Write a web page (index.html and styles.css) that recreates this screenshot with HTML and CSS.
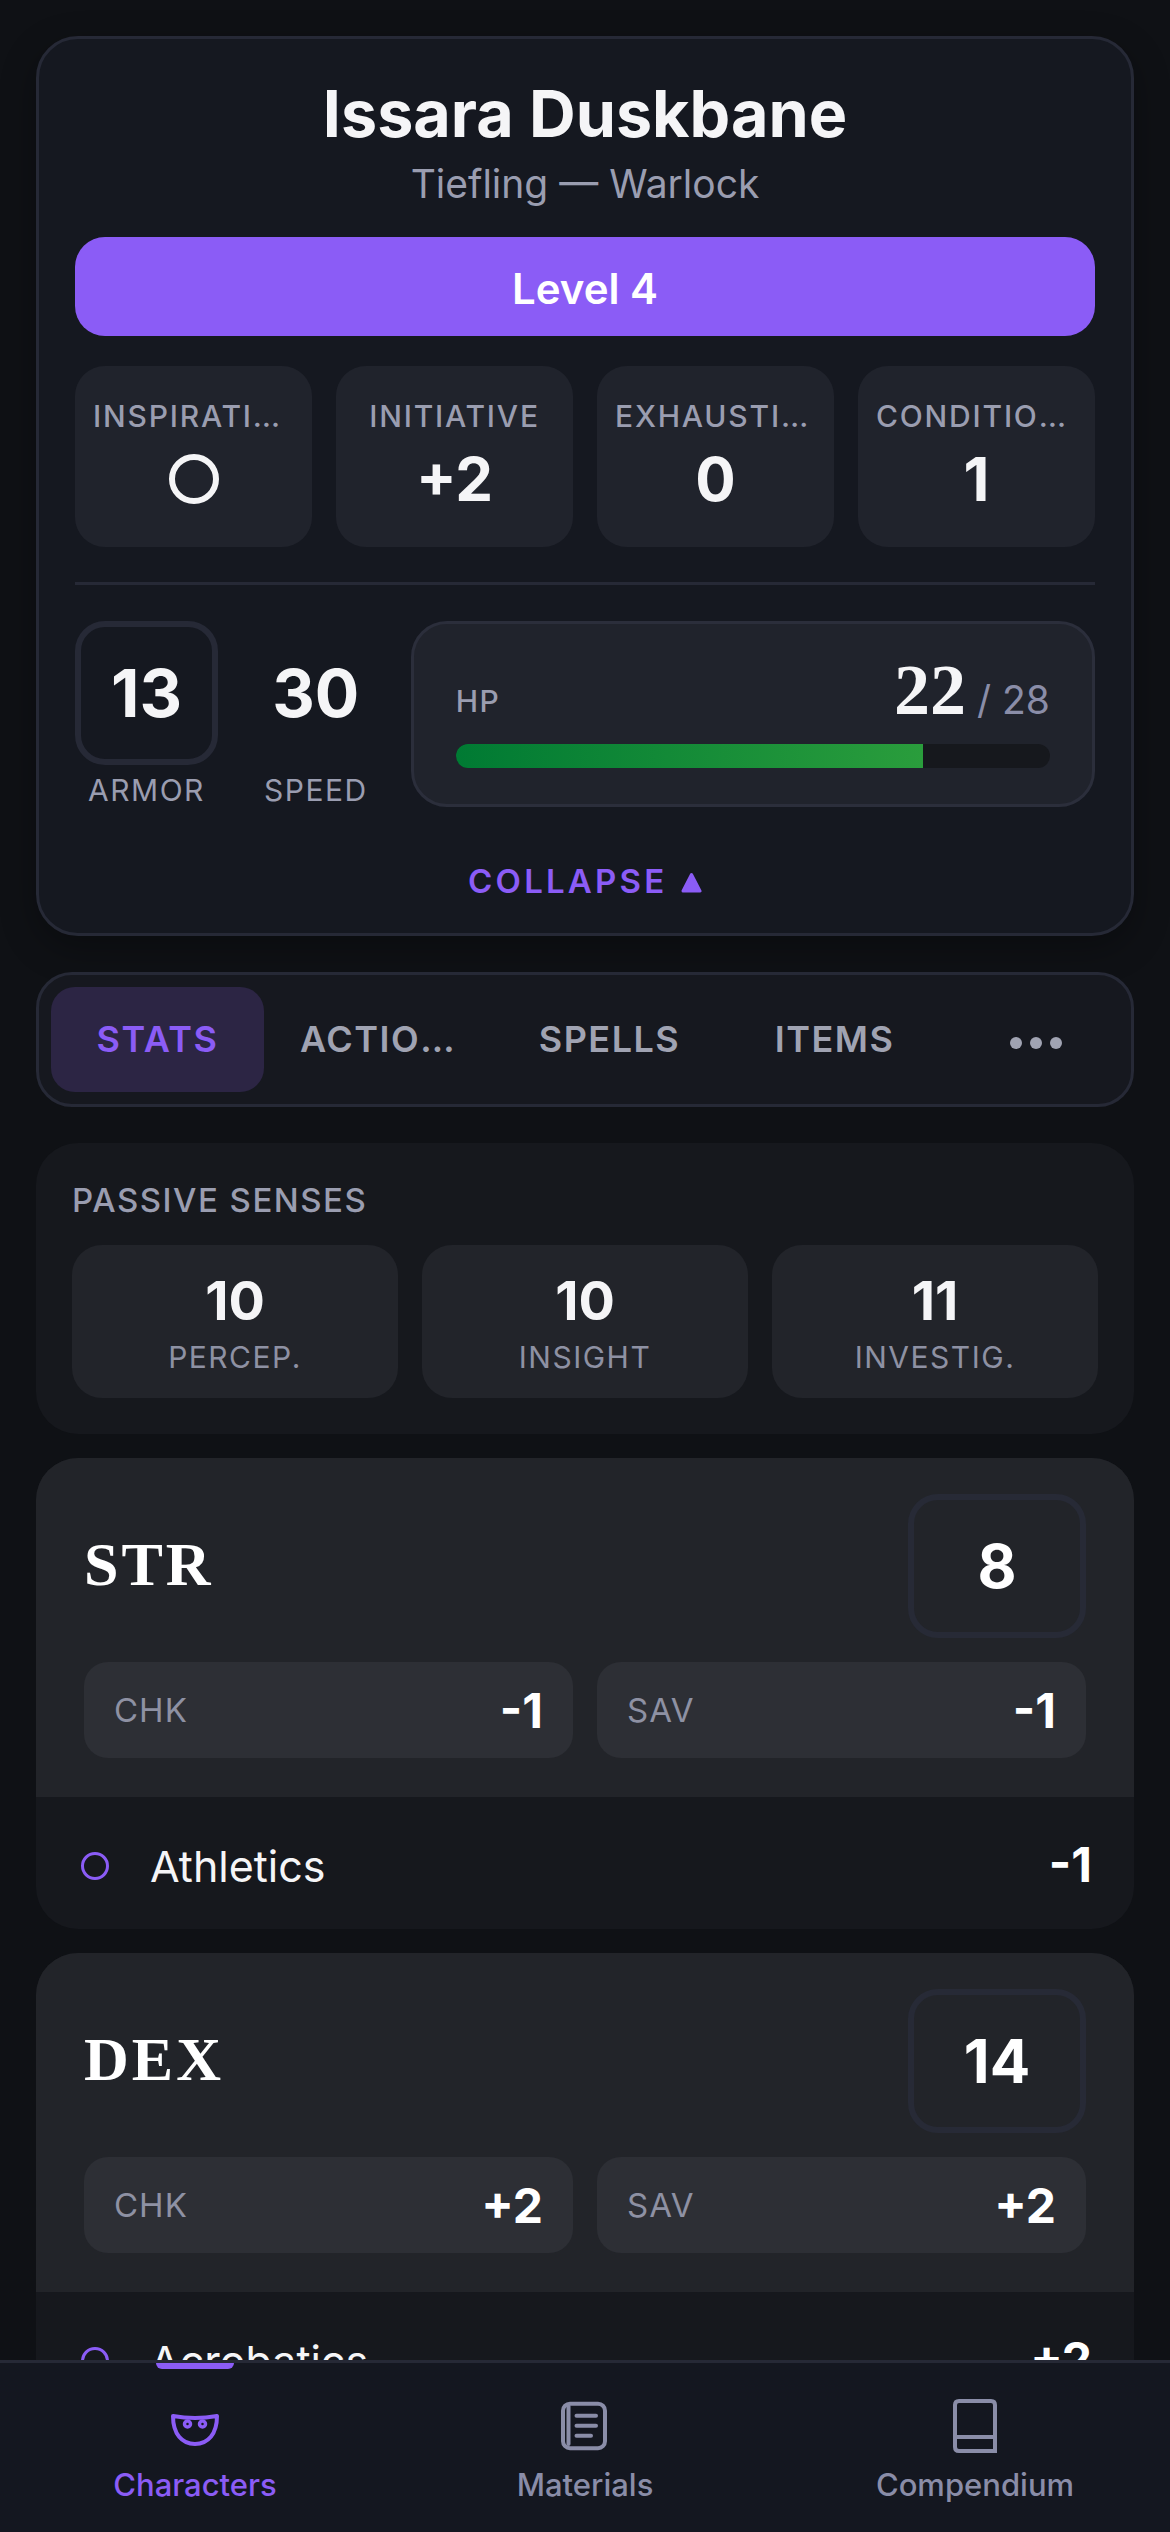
FILE: index.html
```html
<!DOCTYPE html>
<html lang="en">
<head>
<meta charset="utf-8">
<title>Issara Duskbane</title>
<link rel="stylesheet" href="styles.css">
</head>
<body>
<div class="app">
  <main class="scroll">
    <section class="hero">
      <h1 class="name">Issara Duskbane</h1>
      <p class="sub">Tiefling — Warlock</p>
      <button class="level">Level 4</button>
      <div class="chips">
        <div class="chip"><span class="chip-l">INSPIRATION</span><span class="ring"></span></div>
        <div class="chip"><span class="chip-l">INITIATIVE</span><span class="chip-v">+2</span></div>
        <div class="chip"><span class="chip-l">EXHAUSTION</span><span class="chip-v">0</span></div>
        <div class="chip"><span class="chip-l">CONDITIONS</span><span class="chip-v">1</span></div>
      </div>
      <div class="rule"></div>
      <div class="vitals">
        <div class="vital">
          <div class="shield">13</div>
          <span class="vital-l">ARMOR</span>
        </div>
        <div class="vital speed">
          <div class="plain">30</div>
          <span class="vital-l">SPEED</span>
        </div>
        <div class="hp">
          <div class="hp-top">
            <span class="hp-l">HP</span>
            <span class="hp-v"><b>22</b><i> / 28</i></span>
          </div>
          <div class="bar"><div class="fill"></div></div>
        </div>
      </div>
      <div class="collapse">COLLAPSE <svg class="tri" viewBox="0 0 21 21"><path d="M10.500 2.500 L19 19 H2 Z" fill="#8b5cf6" stroke="#8b5cf6" stroke-width="3" stroke-linejoin="round"/></svg></div>
    </section>

    <nav class="tabs">
      <span class="tab t1 on">STATS</span>
      <span class="tab t2">ACTIONS</span>
      <span class="tab t3">SPELLS</span>
      <span class="tab t4">ITEMS</span>
      <span class="more"><i></i><i></i><i></i></span>
    </nav>

    <section class="passive">
      <div class="passive-h">PASSIVE SENSES</div>
      <div class="senses">
        <div class="sense"><b>10</b><span>PERCEP.</span></div>
        <div class="sense"><b>10</b><span>INSIGHT</span></div>
        <div class="sense"><b>11</b><span>INVESTIG.</span></div>
      </div>
    </section>

    <section class="ability">
      <div class="ab-main">
        <div class="ab-head"><h2>STR</h2><div class="score">8</div></div>
        <div class="mods">
          <div class="mod"><span>CHK</span><b>-1</b></div>
          <div class="mod"><span>SAV</span><b>-1</b></div>
        </div>
      </div>
      <div class="skills">
        <div class="skill"><span class="dot"></span><span class="sk-n">Athletics</span><b>-1</b></div>
      </div>
    </section>

    <section class="ability">
      <div class="ab-main">
        <div class="ab-head"><h2>DEX</h2><div class="score">14</div></div>
        <div class="mods">
          <div class="mod"><span>CHK</span><b>+2</b></div>
          <div class="mod"><span>SAV</span><b>+2</b></div>
        </div>
      </div>
      <div class="skills">
        <div class="skill"><span class="dot"></span><span class="sk-n">Acrobatics</span><b>+2</b></div>
      </div>
    </section>
  </main>

  <footer class="nav">
    <div class="nav-i on">
      <span class="ind"></span>
      <svg class="ic" viewBox="0 0 54 54" fill="none" stroke="currentColor" stroke-width="4"><path d="M5 17 Q27 21 49 17 C49 35 40 45 27 45 C14 45 5 35 5 17 Z" stroke-linejoin="round"/><circle cx="19.500" cy="25" r="3" stroke-width="3.500"/><circle cx="34.500" cy="25" r="3" stroke-width="3.500"/></svg>
      <span>Characters</span>
    </div>
    <div class="nav-i">
      <svg class="ic" viewBox="0 0 54 54" fill="none" stroke="currentColor" stroke-width="4" stroke-linecap="round"><rect x="5" y="4.700" width="42" height="44.500" rx="7"/><path d="M10.500 7 V45"/><path d="M18.500 16.700 H38 M18.500 26.700 H38 M18.500 36.700 H33"/></svg>
      <span>Materials</span>
    </div>
    <div class="nav-i">
      <svg class="ic" viewBox="0 0 54 54" fill="none" stroke="currentColor" stroke-width="4"><path d="M47 52 H11 Q7 52 7 48 V6 Q7 2 11 2 H43 Q47 2 47 6 Z"/><path d="M7 38 H47"/></svg>
      <span>Compendium</span>
    </div>
  </footer>
</div>
</body>
</html>
```
FILE: styles.css
```css
* { box-sizing: border-box; }
html, body { margin: 0; padding: 0; background: #0f1115; }
body { font-family: Inter, "Liberation Sans", sans-serif; color: #f5f5f7; }
.app { width: 1170px; height: 2532px; overflow: hidden; display: flex; flex-direction: column; position: relative; }
.scroll { flex: 1 1 auto; min-height: 0; overflow: hidden; padding: 36px 36px 0; display: flex; flex-direction: column; }
.hero { flex: none; height: 900px; background: #151820; border: 3px solid #262936; border-radius: 42px; padding: 36px 36px 0; display: flex; flex-direction: column; box-shadow: 0 12px 36px rgba(0,0,0,.3); }
.name { margin: 0; font-size: 64.600px; line-height: 78px; font-weight: 700; text-align: center; color: #f5f5f7; }
.sub { margin: 6px 0 0; font-size: 39px; line-height: 50px; text-align: center; color: #9a9db0; font-weight: 400; }
.level { margin-top: 28px; height: 99px; flex: none; border: 0; border-radius: 30px; background: #8b5cf6; color: #fff; font: 600 42px Inter, sans-serif; padding: 3px 0 0; }
.chips { margin-top: 30px; display: grid; grid-template-columns: repeat(4, 1fr); gap: 24px; }
.chip { height: 181px; background: #20232c; border-radius: 30px; padding: 30px 18px 0; display: flex; flex-direction: column; align-items: center; min-width: 0; }
.chip-l { max-width: 100%; font-size: 30px; line-height: 40px; font-weight: 500; letter-spacing: 1.800px; color: #9a9db0; white-space: nowrap; overflow: hidden; text-overflow: ellipsis; }
.chip-v { margin-top: 7px; font-size: 60px; line-height: 72px; font-weight: 700; }
.ring { margin-top: 18px; width: 50px; height: 50px; border: 6px solid #f5f5f7; border-radius: 50%; }
.rule { margin-top: 35px; height: 3px; background: #262936; flex: none; }
.vitals { margin-top: 36px; display: flex; align-items: flex-start; gap: 46px; }
.vital { display: flex; flex-direction: column; align-items: center; flex: none; }
.shield { width: 143px; height: 144px; border: 6px solid #262936; border-radius: 30px; background: #151820; display: flex; align-items: center; justify-content: center; font-size: 66px; font-weight: 700; }
.plain { height: 144px; display: flex; align-items: center; font-size: 66px; font-weight: 700; }
.vital-l { margin-top: 6px; font-size: 30px; line-height: 38px; letter-spacing: 1.500px; color: #9a9db0; }
.hp { flex: 1; margin-left: -3px; height: 186px; background: #20232c; border: 3px solid #2b2e3b; border-radius: 36px; padding: 36px 42px 0; }
.hp-top { display: flex; justify-content: space-between; align-items: flex-end; height: 70px; }
.hp-l { font-size: 30px; line-height: 36px; font-weight: 500; letter-spacing: 1.500px; color: #9a9db0; margin-bottom: 11px; }
.hp-v { margin-bottom: 5px; }
.hp-v b { font-family: "Liberation Serif", serif; font-size: 72px; line-height: 70px; font-weight: 700; color: #f5f5f7; }
.hp-v i { font-style: normal; font-size: 39px; color: #8a8da8; }
.bar { margin-top: 14px; height: 24px; background: #16181d; border-radius: 12px; overflow: hidden; }
.fill { width: 78.570%; height: 100%; background: linear-gradient(90deg, #007a33, #2a9d3c); }
.collapse { margin-top: 52px; text-align: center; font-size: 33px; line-height: 40px; font-weight: 600; letter-spacing: 3.200px; color: #8b5cf6; }
.tri { width: 21px; height: 21px; vertical-align: 0; margin-left: 2px; }
.tabs { flex: none; margin-top: 36px; height: 135px; background: #16181f; border: 3px solid #262936; border-radius: 36px; padding: 12px; display: flex; align-items: stretch; }
.tab { flex: none; padding: 0 36px; line-height: 105px; text-align: center; font-size: 36px; font-weight: 600; letter-spacing: 1.500px; color: #a0a3b2; border-radius: 24px; white-space: nowrap; overflow: hidden; text-overflow: ellipsis; }
.t1 { width: 213px; }
.t2 { width: 229px; }
.t3 { width: 233px; }
.t4 { width: 217px; }
.tab.on { background: #2c2544; color: #8b5cf6; }
.more { flex: 1; display: flex; gap: 8px; align-items: center; justify-content: center; padding: 6px 0 0 10px; }
.more i { width: 12px; height: 12px; border-radius: 50%; background: #a0a3b2; }
.passive { flex: none; margin-top: 36px; height: 291px; background: #16181d; border-radius: 42px; padding: 37px 36px 0; }
.passive-h { font-size: 33px; line-height: 40px; font-weight: 500; letter-spacing: 1.500px; color: #9a9db0; }
.senses { margin-top: 25px; display: grid; grid-template-columns: repeat(3, 1fr); gap: 24px; }
.sense { height: 153px; background: #22242a; border-radius: 30px; display: flex; flex-direction: column; align-items: center; padding-top: 24px; }
.sense b { font-size: 54px; line-height: 64px; font-weight: 700; }
.sense span { font-size: 30px; line-height: 36px; letter-spacing: 1.500px; color: #8e91a3; margin-top: 6px; }
.ability { flex: none; margin-top: 24px; border-radius: 42px; overflow: hidden; background: #16181d; }
.ab-main { background: #222429; padding: 36px 48px 39px; height: 339px; }
.ab-head { display: flex; justify-content: space-between; align-items: center; height: 144px; }
.ab-head h2 { margin: -3px 0 0; font-family: "Liberation Serif", serif; font-size: 62px; font-weight: 700; letter-spacing: 3px; color: #fff; }
.score { width: 178px; height: 144px; border: 6px solid #272a36; border-radius: 30px; display: flex; align-items: center; justify-content: center; font-size: 60px; font-weight: 700; color: #fff; }
.mods { margin-top: 24px; display: grid; grid-template-columns: repeat(2, 1fr); gap: 24px; }
.mod { height: 96px; background: #2d2f35; border-radius: 24px; display: flex; justify-content: space-between; align-items: center; padding: 0 30px; }
.mod span { font-size: 33px; color: #8e91a3; letter-spacing: 1px; }
.mod b { font-size: 48px; font-weight: 700; color: #fff; }
.skills { padding: 6px 42px 0 45px; height: 132px; }
.skill { display: flex; align-items: center; height: 126px; }
.dot { width: 28px; height: 28px; border: 3px solid #8b5cf6; border-radius: 50%; }
.sk-n { margin-left: 41px; flex: 1; font-size: 43px; color: #f5f5f7; }
.skill b { font-size: 48px; font-weight: 700; color: #fff; margin-top: -3px; }
.nav { flex: none; height: 172px; position: relative; background: #141720; border-top: 3px solid #262936; display: grid; grid-template-columns: repeat(3, 1fr); }
.nav-i { display: flex; flex-direction: column; align-items: center; padding-top: 36px; font-size: 31px; line-height: 38px; font-weight: 500; color: #8a8da8; position: relative; }
.nav-i.on { color: #8b5cf6; }
.ind { position: absolute; top: 0; left: 156px; width: 78px; height: 6px; background: #8b5cf6; border-radius: 0 0 6px 6px; }
.ic { width: 54px; height: 54px; margin-bottom: 13px; }
```
